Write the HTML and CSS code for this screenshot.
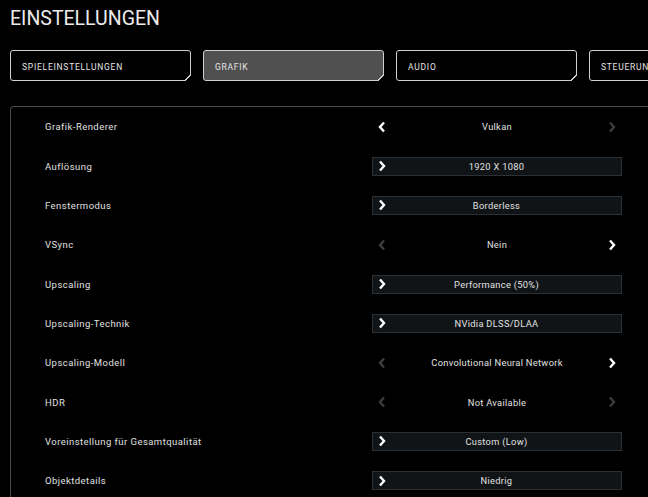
FILE: index.html
```html
<!DOCTYPE html>
<html lang="de">
<head>
<meta charset="utf-8">
<title>Einstellungen</title>
<link rel="stylesheet" href="styles.css">
</head>
<body>
<div class="screen">
  <h1 class="title">EINSTELLUNGEN</h1>
  <nav class="tabs">
    <div class="tab">SPIELEINSTELLUNGEN</div>
    <div class="tab active">GRAFIK</div>
    <div class="tab">AUDIO</div>
    <div class="tab">STEUERUNG</div>
  </nav>
  <section class="panel">
    <div class="row">
      <div class="label">Grafik-Renderer</div>
      <div class="control arrows">
        <svg class="chev" viewBox="0 0 8 12"><path d="M6 1.5 L2 6 L6 10.5"/></svg>
        <span class="value">Vulkan</span>
        <svg class="chev off" viewBox="0 0 8 12"><path d="M2 1.5 L6 6 L2 10.5"/></svg>
      </div>
    </div>
    <div class="row">
      <div class="label">Auflösung</div>
      <div class="control box">
        <svg class="chev" viewBox="0 0 8 12"><path d="M2 1.5 L6 6 L2 10.5"/></svg>
        <span class="value">1920 X 1080</span>
      </div>
    </div>
    <div class="row">
      <div class="label">Fenstermodus</div>
      <div class="control box">
        <svg class="chev" viewBox="0 0 8 12"><path d="M2 1.5 L6 6 L2 10.5"/></svg>
        <span class="value">Borderless</span>
      </div>
    </div>
    <div class="row">
      <div class="label">VSync</div>
      <div class="control arrows">
        <svg class="chev off" viewBox="0 0 8 12"><path d="M6 1.5 L2 6 L6 10.5"/></svg>
        <span class="value">Nein</span>
        <svg class="chev" viewBox="0 0 8 12"><path d="M2 1.5 L6 6 L2 10.5"/></svg>
      </div>
    </div>
    <div class="row">
      <div class="label">Upscaling</div>
      <div class="control box">
        <svg class="chev" viewBox="0 0 8 12"><path d="M2 1.5 L6 6 L2 10.5"/></svg>
        <span class="value">Performance (50%)</span>
      </div>
    </div>
    <div class="row">
      <div class="label">Upscaling-Technik</div>
      <div class="control box">
        <svg class="chev" viewBox="0 0 8 12"><path d="M2 1.5 L6 6 L2 10.5"/></svg>
        <span class="value">NVidia DLSS/DLAA</span>
      </div>
    </div>
    <div class="row">
      <div class="label">Upscaling-Modell</div>
      <div class="control arrows">
        <svg class="chev off" viewBox="0 0 8 12"><path d="M6 1.5 L2 6 L6 10.5"/></svg>
        <span class="value">Convolutional Neural Network</span>
        <svg class="chev" viewBox="0 0 8 12"><path d="M2 1.5 L6 6 L2 10.5"/></svg>
      </div>
    </div>
    <div class="row">
      <div class="label">HDR</div>
      <div class="control arrows">
        <svg class="chev off" viewBox="0 0 8 12"><path d="M6 1.5 L2 6 L6 10.5"/></svg>
        <span class="value">Not Available</span>
        <svg class="chev off" viewBox="0 0 8 12"><path d="M2 1.5 L6 6 L2 10.5"/></svg>
      </div>
    </div>
    <div class="row">
      <div class="label">Voreinstellung für Gesamtqualität</div>
      <div class="control box">
        <svg class="chev" viewBox="0 0 8 12"><path d="M2 1.5 L6 6 L2 10.5"/></svg>
        <span class="value">Custom (Low)</span>
      </div>
    </div>
    <div class="row">
      <div class="label">Objektdetails</div>
      <div class="control box">
        <svg class="chev" viewBox="0 0 8 12"><path d="M2 1.5 L6 6 L2 10.5"/></svg>
        <span class="value">Niedrig</span>
      </div>
    </div>
  </section>
</div>
</body>
</html>
```
FILE: styles.css
```css
html, body {
  margin: 0;
  padding: 0;
  background: #000;
  overflow: hidden;
}
body {
  width: 648px;
  height: 497px;
  font-family: Roboto, "Liberation Sans", sans-serif;
  color: #e2e2e2;
}
.screen {
  width: 648px;
  height: 497px;
  overflow: hidden;
}
.title {
  margin: 0;
  padding: 8px 0 0 10px;
  height: 50px;
  box-sizing: border-box;
  font-size: 19.5px;
  font-weight: 400;
  letter-spacing: 0;
  color: #ececec;
  line-height: 22px;
}
.tabs {
  display: flex;
  gap: 12px;
  padding-left: 10px;
  width: 900px;
}
.tab {
  position: relative;
  flex: 0 0 auto;
  width: 181px;
  height: 31px;
  box-sizing: border-box;
  border: 1px solid #cfcfcf;
  border-radius: 3px;
  padding: 3px 0 0 11px;
  display: flex;
  align-items: center;
  font-size: 8.5px;
  font-weight: 400;
  letter-spacing: 0.75px;
  color: #e6e6e6;
}
.tab::after {
  content: "";
  position: absolute;
  right: -1px;
  bottom: -1px;
  width: 7px;
  height: 7px;
  background: linear-gradient(135deg, transparent 46%, #cfcfcf 46%, #cfcfcf 60%, #000 60%);
}
.tab.active {
  background: #505050;
}
.panel {
  margin: 25px 0 0 10px;
  width: 700px;
  border-top: 1px solid #4a4a4a;
  border-left: 1px solid #4a4a4a;
  border-top-left-radius: 4px;
  display: flex;
  flex-direction: column;
}
.row {
  display: flex;
  align-items: center;
  height: 39.35px;
  flex: 0 0 auto;
}
.label {
  width: 361px;
  padding-left: 34px;
  box-sizing: border-box;
  font-size: 9.5px;
  letter-spacing: 0.45px;
  color: #e0e0e0;
}
.control {
  width: 250px;
  height: 19px;
  box-sizing: border-box;
  display: flex;
  align-items: center;
  position: relative;
  padding: 0 5px;
}
.control.box {
  background: #101416;
  border: 1px solid #2b3034;
}
.value {
  flex: 1;
  text-align: center;
  font-size: 9.3px;
  letter-spacing: 0.3px;
  color: #e2e2e2;
}
.control.box .value {
  margin-right: 9px;
}
.chev {
  width: 8px;
  height: 12px;
  flex: 0 0 auto;
}
.chev path {
  fill: none;
  stroke: #fff;
  stroke-width: 2.4;
}
.chev.off path {
  stroke: #3c3c3c;
}
.control.arrows {
  padding: 0 6px;
}
```
